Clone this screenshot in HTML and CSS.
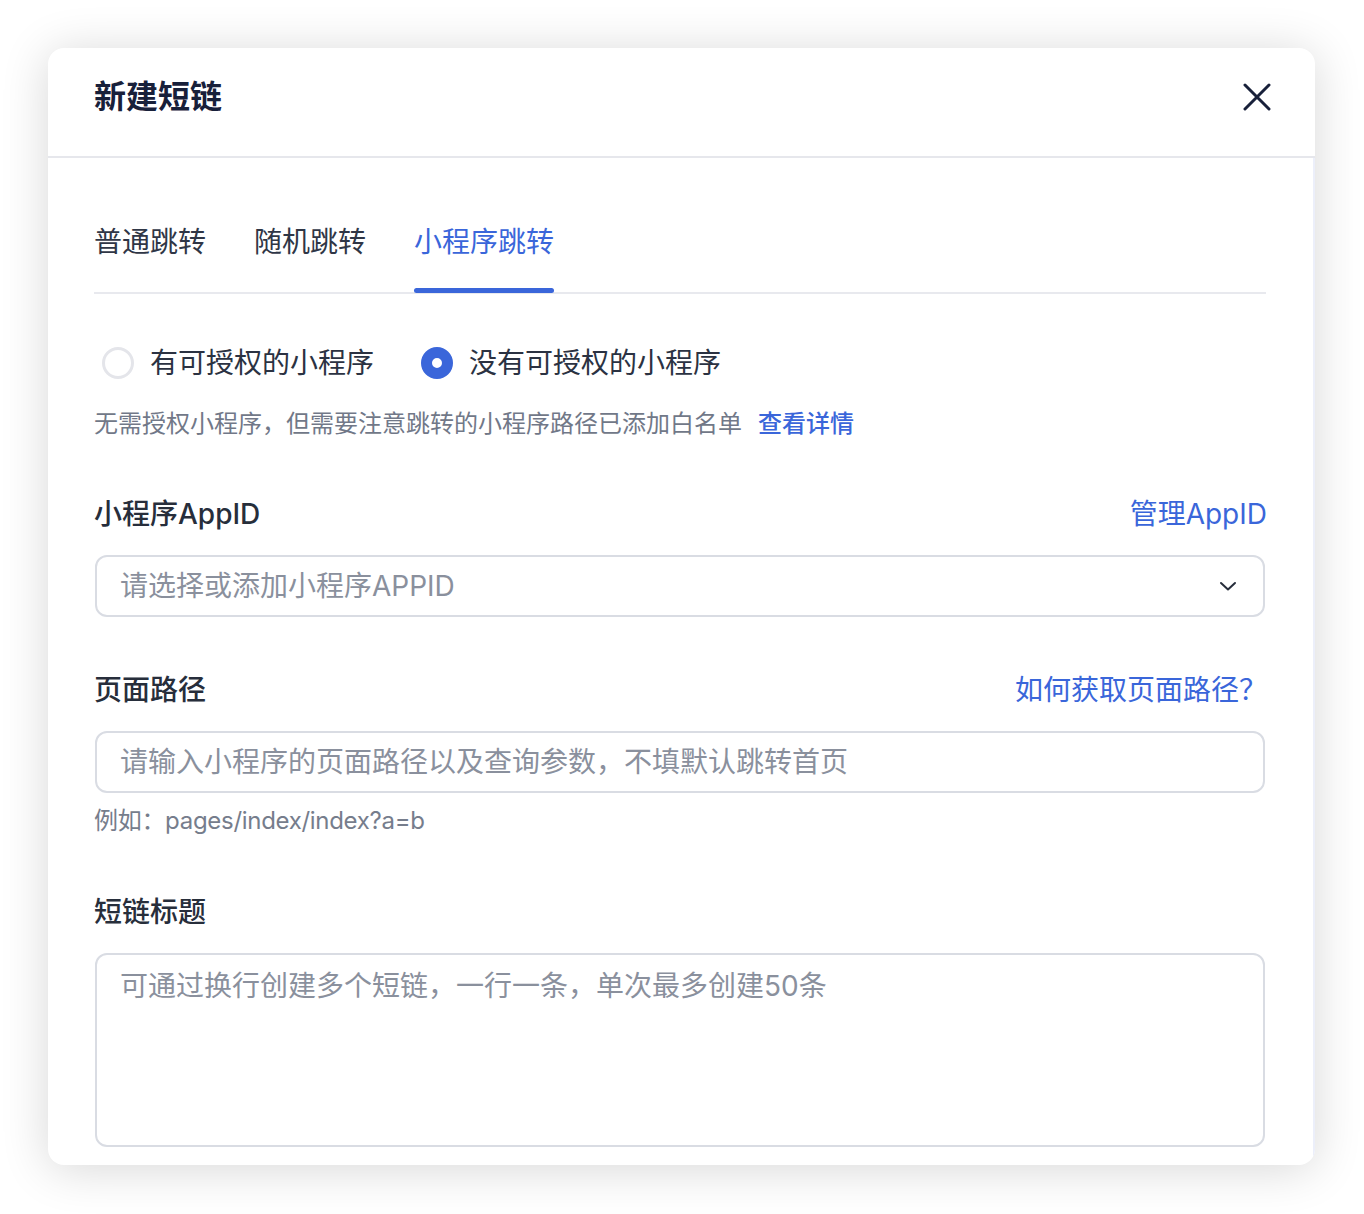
FILE: index.html
```html
<!DOCTYPE html>
<html lang="zh-CN">
<head>
<meta charset="utf-8">
<link rel="stylesheet" href="styles.css">
</head>
<body>
<div class="dialog">
  <div class="dialog-header">
    <div class="dialog-title">新建短链</div>
    <svg class="close" width="28" height="28" viewBox="0 0 28 28"><path d="M2 2L26 26M26 2L2 26" stroke="#18203a" stroke-width="3" stroke-linecap="round" fill="none"/></svg>
  </div>
  <div class="dialog-body">
    <div class="tabs">
      <div class="tab">普通跳转</div>
      <div class="tab">随机跳转</div>
      <div class="tab active">小程序跳转</div>
    </div>
    <div class="radios">
      <label class="radio"><span class="dot"></span>有可授权的小程序</label>
      <label class="radio checked"><span class="dot"></span>没有可授权的小程序</label>
    </div>
    <div class="hint">无需授权小程序，但需要注意跳转的小程序路径已添加白名单<a class="link">查看详情</a></div>

    <div class="field-head first">
      <span class="label">小程序AppID</span>
      <a class="head-link">管理AppID</a>
    </div>
    <div class="control select">
      <span class="placeholder">请选择或添加小程序APPID</span>
      <svg width="18" height="12" viewBox="0 0 18 12"><path d="M2 3L9 9.5L16 3" stroke="#272e3b" stroke-width="2" fill="none" stroke-linecap="round" stroke-linejoin="round"/></svg>
    </div>

    <div class="field-head">
      <span class="label">页面路径</span>
      <a class="head-link">如何获取页面路径？</a>
    </div>
    <div class="control">
      <span class="placeholder">请输入小程序的页面路径以及查询参数，不填默认跳转首页</span>
    </div>
    <div class="example">例如：pages/index/index?a=b</div>

    <div class="field-head third">
      <span class="label">短链标题</span>
    </div>
    <div class="control textarea">
      <span class="placeholder">可通过换行创建多个短链，一行一条，单次最多创建50条</span>
    </div>
  </div>
</div>
</body>
</html>
```
FILE: styles.css
```css
* { box-sizing: border-box; }
html, body { margin: 0; padding: 0; background: #ffffff; }
body {
  font-family: "Inter", "Noto Sans CJK SC", sans-serif;
  color: #272e3b;
  padding: 48px 0 0 48px;
  height: 1214px;
  overflow: hidden;
}
.dialog {
  width: 1267px;
  height: 1117px;
  background: #fff;
  border-radius: 16px;
  box-shadow: 0 4px 48px rgba(0, 0, 0, 0.16);
  overflow: hidden;
  display: flex;
  flex-direction: column;
}
.dialog-header {
  height: 110px;
  flex: none;
  display: flex;
  align-items: center;
  justify-content: space-between;
  padding: 0 44px 10px 46px;
  border-bottom: 2px solid #e6e7ec;
}
.dialog-title {
  font-size: 32px;
  font-weight: 600;
  color: #18203a;
  line-height: 44px;
}
.close { display: block; }
.dialog-body {
  flex: 1;
  overflow: hidden;
  padding: 64px 47px 0 46px;
  border-right: 2px solid #eceffa;
}
.tabs {
  display: flex;
  gap: 48px;
  border-bottom: 2px solid #e8e9ee;
}
.tab {
  position: relative;
  font-size: 28px;
  line-height: 40px;
  padding-bottom: 30px;
  color: #2f3646;
}
.tab.active { color: #3a66da; }
.tab.active::after {
  content: "";
  position: absolute;
  left: 0;
  right: 0;
  bottom: -1px;
  height: 5px;
  border-radius: 3px;
  background: #3a66da;
}
.radios {
  display: flex;
  gap: 47px;
  margin-top: 49px;
  padding-left: 8px;
}
.radio {
  display: flex;
  align-items: center;
  gap: 16px;
  font-size: 28px;
  line-height: 40px;
  color: #2b3242;
}
.dot {
  width: 32px;
  height: 32px;
  border-radius: 50%;
  border: 3px solid #e4e5ea;
  flex: none;
}
.radio.checked .dot {
  border: 11px solid #3a66da;
  background: #fff;
}
.hint {
  margin-top: 24px;
  font-size: 24px;
  line-height: 34px;
  color: #717888;
}
.link {
  margin-left: 16px;
  color: #3a66da;
  font-weight: 500;
}
.field-head {
  margin-top: 53px;
  display: flex;
  justify-content: space-between;
  align-items: center;
  line-height: 40px;
}
.field-head.third { margin-top: 54px; }
.label {
  font-size: 28px;
  font-weight: 500;
  color: #272e3b;
}
.head-link {
  font-size: 28px;
  color: #3a66da;
  margin-right: -1px;
}
.control {
  margin-top: 21px;
  margin-left: 1px;
  margin-right: 1px;
  height: 62px;
  border: 2px solid #d9dce3;
  border-radius: 12px;
  display: flex;
  align-items: center;
  justify-content: space-between;
  padding: 0 26px 0 23px;
}
.placeholder {
  font-size: 28px;
  line-height: 40px;
  color: #8a909d;
}
.textarea {
  height: 194px;
  align-items: flex-start;
  padding-top: 11px;
}
.example {
  margin-top: 11px;
  font-size: 24px;
  line-height: 34px;
  color: #767d8c;
  letter-spacing: -0.3px;
}
```
